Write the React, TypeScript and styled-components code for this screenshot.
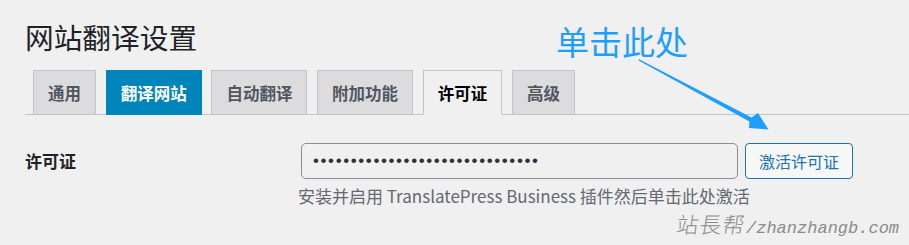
import React from "react";
import styled, { createGlobalStyle } from "styled-components";

const Global = createGlobalStyle`
  html, body { margin: 0; padding: 0; background: #f0f0f1; }
  body { font-family: "Noto Sans CJK SC", "Noto Sans", sans-serif; width: 909px; height: 245px; overflow: hidden; }
`;

const Page = styled.div`
  position: relative;
  width: 909px;
  height: 245px;
  padding: 19px 0 0 25px;
  box-sizing: border-box;
`;

const Title = styled.h1`
  margin: 0;
  font-size: 28.7px;
  line-height: 36px;
  font-weight: 400;
  color: #1d2327;
`;

const TabBar = styled.nav`
  display: flex;
  gap: 9.7px;
  margin-top: 15px;
  padding-left: 8px;
  border-bottom: 1px solid #c3c4c7;
  height: 44px;
  align-items: flex-end;
`;

const Tab = styled.a<{ $variant?: "normal" | "blue" | "active" }>`
  box-sizing: border-box;
  height: 45px;
  margin-bottom: -1px;
  padding: 0 14px;
  display: flex;
  align-items: center;
  font-size: 16.5px;
  font-weight: 700;
  text-decoration: none;
  border: 1px solid
    ${(p) => (p.$variant === "blue" ? "#0085ba" : "#c3c4c7")};
  border-bottom-color: ${(p) =>
    p.$variant === "active" ? "#f0f0f1" : p.$variant === "blue" ? "#0085ba" : "#c3c4c7"};
  background: ${(p) =>
    p.$variant === "blue" ? "#0085ba" : p.$variant === "active" ? "#f0f0f1" : "#dcdcde"};
  color: ${(p) =>
    p.$variant === "blue" ? "#ffffff" : p.$variant === "active" ? "#000000" : "#50575e"};
`;

const FormRow = styled.div`
  display: grid;
  grid-template-columns: 276px auto;
  margin-top: 28px;
`;

const Label = styled.label`
  font-size: 17px;
  font-weight: 700;
  color: #1d2327;
  line-height: 36px;
`;

const Field = styled.div`
  display: flex;
  flex-direction: column;
`;

const Controls = styled.div`
  display: flex;
  gap: 7px;
`;

const KeyInput = styled.input`
  box-sizing: border-box;
  width: 437px;
  height: 36px;
  border: 1px solid #8c8f94;
  border-radius: 5px;
  background: #f0f0f1;
  padding: 0 11px;
  font-family: "Liberation Sans", sans-serif;
  font-size: 17px;
  letter-spacing: 1.6px;
  color: #2c3338;
  outline: none;
`;

const ActivateButton = styled.button`
  box-sizing: border-box;
  height: 36px;
  padding: 0 13px;
  border: 1px solid #2271b1;
  border-radius: 4px;
  background: #f6f7f7;
  color: #2271b1;
  font-family: "Noto Sans CJK SC", sans-serif;
  font-size: 16px;
`;

const Hint = styled.p`
  margin: 5px 0 0 -3px;
  font-size: 17px;
  line-height: 24px;
  color: #646970;
`;

const Annotation = styled.div`
  position: absolute;
  left: 556px;
  top: 19px;
  font-size: 33px;
  line-height: 44px;
  color: #1e9fff;
`;

const ArrowSvg = styled.svg`
  position: absolute;
  left: 630px;
  top: 50px;
`;

const Watermark = styled.div`
  position: absolute;
  left: 677px;
  top: 207px;
  display: flex;
  align-items: baseline;
  color: #8a8a8a;
`;

const WmCjk = styled.span`
  font-family: "Noto Sans CJK TC", sans-serif;
  font-size: 22px;
  font-weight: 300;
  letter-spacing: 1px;
  transform: skewX(-8deg);
  display: inline-block;
`;

const WmLatin = styled.span`
  font-family: "Liberation Mono", monospace;
  font-style: italic;
  font-size: 17px;
`;

export default function App() {
  return (
    <>
      <Global />
      <Page>
        <Title>网站翻译设置</Title>
        <TabBar>
          <Tab>通用</Tab>
          <Tab $variant="blue">翻译网站</Tab>
          <Tab>自动翻译</Tab>
          <Tab>附加功能</Tab>
          <Tab $variant="active">许可证</Tab>
          <Tab>高级</Tab>
        </TabBar>
        <FormRow>
          <Label>许可证</Label>
          <Field>
            <Controls>
              <KeyInput type="password" readOnly value="abcdefghijklmnopqrstuvwxyz1234" />
              <ActivateButton>激活许可证</ActivateButton>
            </Controls>
            <Hint>安装并启用 TranslatePress Business 插件然后单击此处激活</Hint>
          </Field>
        </FormRow>
        <Annotation>单击此处</Annotation>
        <ArrowSvg width="150" height="90" viewBox="0 0 150 90">
          <polygon
            points="9,9.3 121.6,67.4 128,63 138.5,79.5 119,78 119.4,71.6 8.6,10.6"
            fill="#1e9fff"
          />
        </ArrowSvg>
        <Watermark>
          <WmCjk>站長帮</WmCjk>
          <WmLatin>/zhanzhangb.com</WmLatin>
        </Watermark>
      </Page>
    </>
  );
}
